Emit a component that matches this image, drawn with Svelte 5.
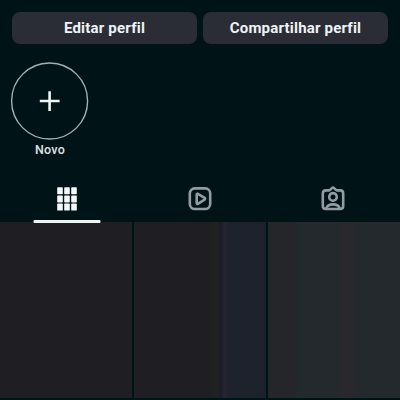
<script>
  const actions = ["Editar perfil", "Compartilhar perfil"];
  const tabs = ["grid", "reels", "tagged"];
  const tiles = ["plain", "blue", "slate"];

  // Row and column offsets of the grid icon
  const cols = [0.2, 7.2, 14.2];
  const rows = [0.2, 8.4, 16.6];

  let active = $state("grid");
</script>

<div class="profile">
  <div class="actions">
    {#each actions as label}
      <button class="action"><span>{label}</span></button>
    {/each}
  </div>

  <div class="highlights">
    <div class="highlight">
      <svg class="ring" width="78" height="78" viewBox="0 0 78 78">
        <circle cx="38.6" cy="39" r="38" />
        <path d="M38.6 29.2V49M28.8 39H48.6" />
      </svg>
      <span class="name">Novo</span>
    </div>
  </div>

  <div class="tabs">
    {#each tabs as tab}
      <button
        class="tab"
        class:active={active === tab}
        aria-label={tab}
        onclick={() => (active = tab)}
      >
        {#if tab === "grid"}
          <svg class="grid-icon" width="20" height="24" viewBox="0 0 20 24">
            {#each rows as y}
              {#each cols as x}
                <rect {x} {y} width="5.6" height="7" rx="0.7" />
              {/each}
            {/each}
          </svg>
        {:else if tab === "reels"}
          <svg width="24" height="24" viewBox="0 0 24 24">
            <rect x="1.8" y="1.4" width="20.4" height="20.6" rx="5" />
            <path d="M8.7 7.5C8.7 6.8 9.3 6.5 9.9 6.8L16.6 10.9C17.3 11.4 17.3 12.2 16.6 12.7L9.9 16.8C9.3 17.1 8.7 16.8 8.7 16.1Z" />
          </svg>
        {:else}
          <svg width="24" height="24" viewBox="0 0 24 24">
            <path d="M8.4 3.4L11 1.1Q12 0.3 13 1.1L15.6 3.4H19.2Q22.2 3.4 22.2 6.4V19Q22.2 22 19.2 22H4.8Q1.8 22 1.8 19V6.4Q1.8 3.4 4.8 3.4Z" />
            <circle cx="12" cy="9.9" r="3.8" />
            <path d="M5.3 21.3C6.2 18.4 8.8 17.4 12 17.4S17.8 18.4 18.7 21.3" />
          </svg>
        {/if}
      </button>
    {/each}
  </div>

  <div class="tiles">
    {#each tiles as tile}
      <div class="tile {tile}"></div>
    {/each}
  </div>
</div>

<style>
  :global(body) {
    margin: 0;
    background: #001316;
  }

  .profile {
    display: flex;
    flex-direction: column;
    box-sizing: border-box;
    width: 400px;
    height: 400px;
    padding-top: 12px;
    overflow: hidden;
    background: #001316;
    font-family: Roboto, "Liberation Sans", sans-serif;
  }

  button {
    border: 0;
    padding: 0;
    font-family: inherit;
    cursor: pointer;
  }

  svg {
    display: block;
    overflow: visible;
    fill: none;
  }

  .actions {
    display: grid;
    grid-template-columns: 1fr 1fr;
    gap: 6px;
    height: 32px;
    padding: 0 12px;
  }

  .action {
    padding-top: 1px;
    border-radius: 8px;
    background: #2b2d36;
    color: #eff3f5;
    font-size: 15px;
    font-weight: 700;
    letter-spacing: 0.2px;
    line-height: 31px;
  }

  .highlights {
    display: flex;
    height: 130px;
    padding: 18px 11px 0;
    box-sizing: border-box;
  }

  .highlight {
    display: flex;
    flex-direction: column;
    align-items: center;
    width: 78px;
  }

  .ring circle {
    stroke: #a4b0b1;
    stroke-width: 1.4;
  }

  .ring path {
    stroke: #eef6f4;
    stroke-width: 2.6;
  }

  .name {
    margin-top: 2px;
    color: #d5dcdd;
    font-size: 12.5px;
    font-weight: 600;
    letter-spacing: 0.2px;
    line-height: 16px;
  }

  .tabs {
    display: grid;
    grid-template-columns: repeat(3, 1fr);
    height: 49px;
  }

  .tab {
    display: flex;
    align-items: center;
    justify-content: center;
    position: relative;
    background: none;
  }

  .tab svg {
    stroke: #929da3;
    stroke-width: 2.6;
    stroke-linejoin: round;
  }

  .tab .grid-icon {
    fill: #f3f9f9;
    stroke: none;
  }

  .tab.active::after {
    position: absolute;
    bottom: 0;
    left: 50%;
    width: 67px;
    height: 3px;
    border-radius: 1px;
    background: #eef5f5;
    content: "";
    transform: translateX(-50%);
  }

  .tiles {
    display: grid;
    grid-template-columns: 132px 132px 132px;
    gap: 2px;
    height: 176px;
    margin-top: -1px;
  }

  .tile {
    background: #1f1e23;
  }

  .blue {
    background: linear-gradient(
      to right,
      #1f1e22 0 76px,
      #1f2123 80px 84px,
      #1e1c25 86px 88px,
      #272533 90px,
      #1e222c 94px,
      #1c222b 132px
    );
  }

  .slate {
    background: linear-gradient(
      to right,
      #252629 0 16px,
      #26252c 18px 26px,
      #23292d 30px 68px,
      #29282d 74px 84px,
      #23292d 88px
    );
  }
</style>
